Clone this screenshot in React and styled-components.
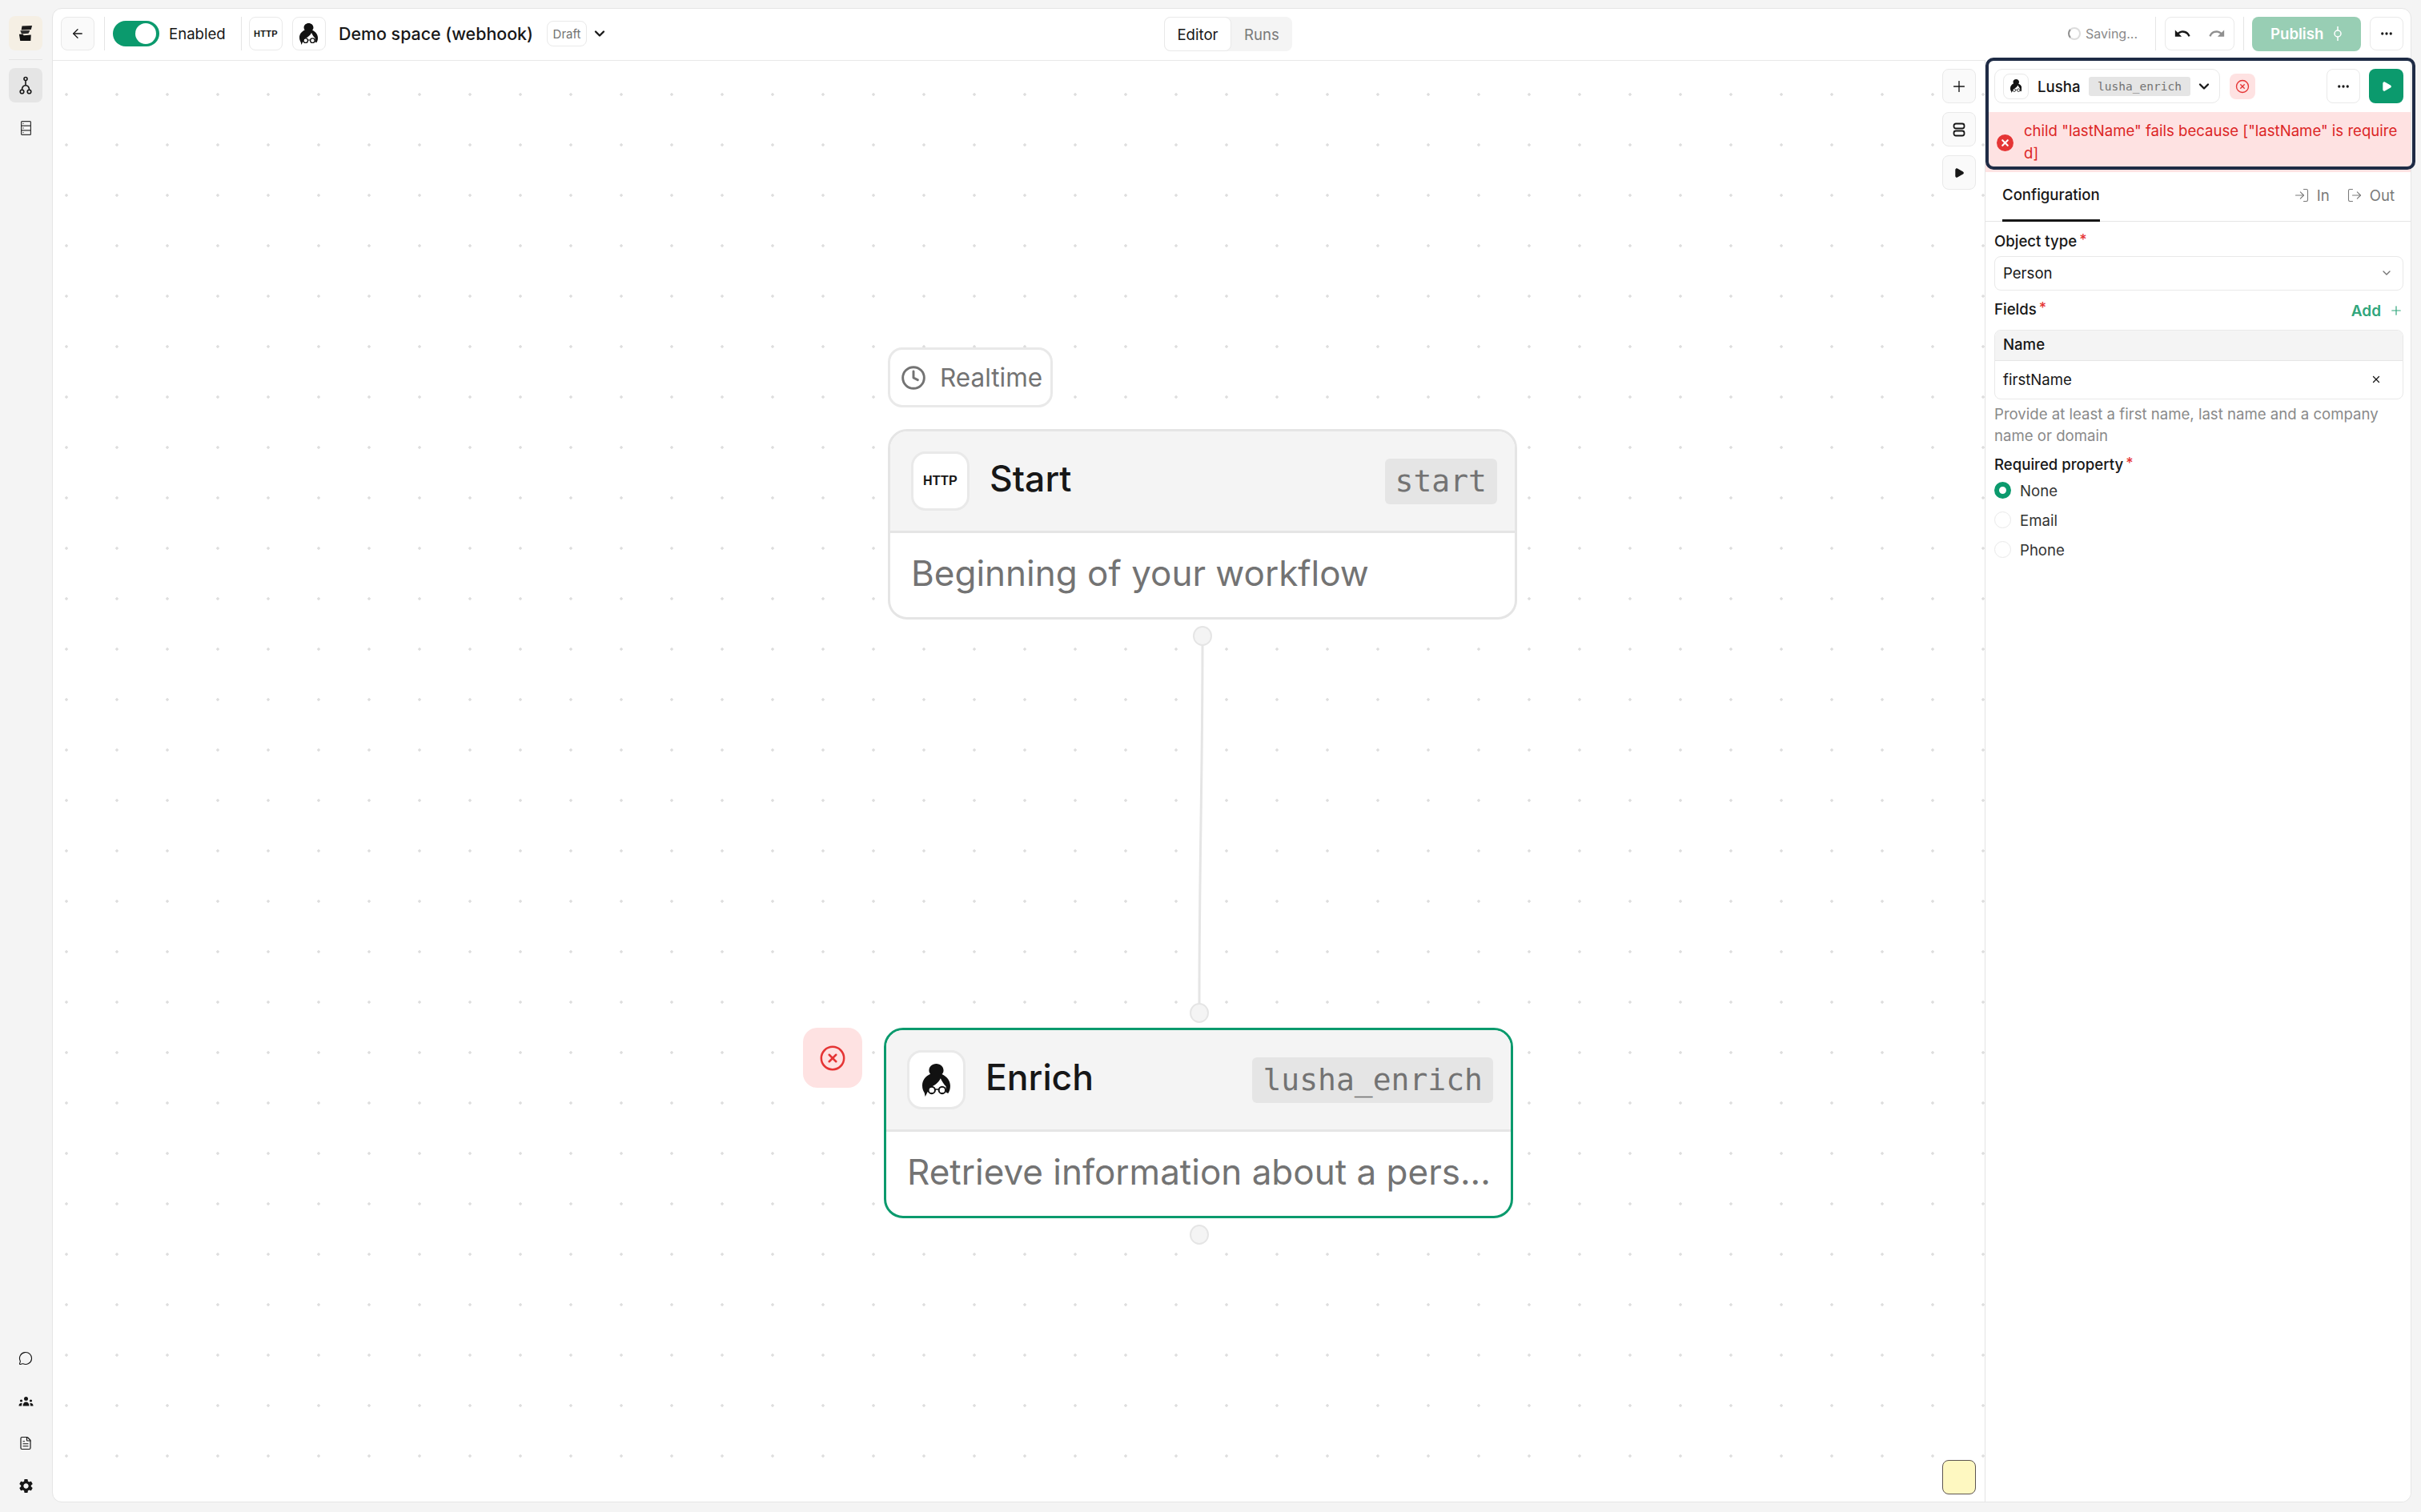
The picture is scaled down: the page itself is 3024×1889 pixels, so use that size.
import React from 'react';
import styled, { createGlobalStyle } from 'styled-components';
import { ArrowLeft, ChevronDown, Plus, Play, X, CircleX, Clock, MessageCircle, FileText, Ellipsis, LogIn, LogOut } from 'lucide-react';
import { MdUndo, MdRedo, MdSettings } from 'react-icons/md';

const Global = createGlobalStyle`
  html, body { margin: 0; padding: 0; background: #f4f4f4; }
  * { box-sizing: border-box; }
  body { font-family: Inter, "Liberation Sans", sans-serif; color: #171717; }
`;

const Page = styled.div`
  width: 3024px; height: 1889px; display: flex; background: #f4f4f4; overflow: hidden;
`;
const Rail = styled.nav`
  width: 65px; flex: none; display: flex; flex-direction: column; padding: 20px 12px 0 11px;
`;
const RailBtn = styled.div`
  width: 42px; height: 43px; border-radius: 8px; display: flex; align-items: center; justify-content: center;
  background: ${p => p.$active ? '#e5e5e5' : p.$brand ? '#f5efe4' : 'transparent'};
  color: #171717; margin-bottom: ${p => p.$gap || 0}px;
`;
const RailRule = styled.div`height: 1px; background: #e5e5e5; margin: 11px 0 10px;`;
const RailSpacer = styled.div`flex: 1;`;
const Card = styled.div`
  width: 2947px; height: 1867px; margin-top: 10px; background: #fff; border: 1px solid #e5e5e5;
  border-radius: 12px; display: flex; flex-direction: column; position: relative;
`;
const TopBar = styled.header`
  height: 65px; flex: none; border-bottom: 1.5px solid #e9e9e9; display: flex; align-items: center; padding: 0 9px 2px 10px; position: relative;
`;
const Square = styled.div`
  width: ${p => p.$w || 42}px; height: ${p => p.$h || 42}px; flex: none; border: 1.5px solid #e9e9e9; border-radius: 8px;
  margin-left: ${p => p.$ml || 0}px;
  display: flex; align-items: center; justify-content: center; background: ${p => p.$bg || '#fff'}; color: #171717;
`;
const VRule = styled.div`width: 1px; height: 42px; background: #e5e5e5; flex: none; margin: 0 ${p => p.$r ?? 10}px 0 ${p => p.$l ?? 12}px;`;
const Toggle = styled.div`
  width: 58px; height: 32px; border-radius: 16px; background: #0b9a6d; position: relative; flex: none;
  &::after { content: ''; position: absolute; top: 3px; right: 4px; width: 26px; height: 26px; border-radius: 50%; background: #fff; }
`;
const BarLabel = styled.span`font-size: 18.6px; font-weight: 400; margin-left: 12px; white-space: nowrap; width: 71px;`;
const HttpMark = styled.span`
  font-family: "Liberation Sans", Arial, sans-serif; font-weight: 700; font-size: ${p => p.$s || 11}px; letter-spacing: 0.3px; color: #171717;
`;
const Title = styled.span`font-size: 21.4px; font-weight: 450; margin-left: 16px; white-space: nowrap; width: 243px;`;
const Pill = styled.span`
  width: 50px; height: 32px; margin-left: 17px; border: 1.5px solid #e9e9e9; border-radius: 8px; display: flex; align-items: center; justify-content: center;
  color: #737373; font-size: 15px;
`;
const DraftChevron = styled.span`display: flex; margin-left: 6px;`;
const Tabs = styled.div`
  position: absolute; left: 1388px; top: 10px; width: 160px; height: 43px; display: flex; background: #f4f4f4; border-radius: 8px;
`;
const Tab = styled.div`
  height: 100%; width: ${p => p.$w}px; display: flex; align-items: center; justify-content: center; font-size: 18.6px; border-radius: 8px;
  color: ${p => p.$on ? '#171717' : '#7a7a7a'}; background: ${p => p.$on ? '#fff' : 'transparent'}; border: ${p => p.$on ? '1.5px solid #e9e9e9' : '0'};
`;
const Grow = styled.div`flex: 1;`;
const Saving = styled.div`display: flex; align-items: center; gap: 6px; color: #8a8a8a; font-size: 16px;`;
const Spinner = styled.span`
  width: 16px; height: 16px; border-radius: 50%; border: 2.5px solid #dcdcdc; border-left-color: #8f8f8f; display: block;
`;
const UndoGroup = styled.div`
  width: 87px; height: 42px; border: 1.5px solid #e9e9e9; border-radius: 8px; display: flex; align-items: center; justify-content: space-between; padding: 0 10px; flex: none;
`;
const Publish = styled.div`
  width: 136px; height: 43px; border-radius: 8px; background: #98ceb4; color: #fff; font-weight: 600; font-size: 18.6px; flex: none;
  display: flex; align-items: center; padding-left: 23px; gap: 12px;
`;
const Body = styled.div`flex: 1; min-height: 0; display: flex; position: relative; margin-top: -1px;`;
const Canvas = styled.main`
  flex: 1; position: relative; overflow: hidden; border-bottom-left-radius: 12px;
  background-image: radial-gradient(circle at 17px 43px, #dedede 0, #dedede 1.4px, transparent 2.1px);
  background-size: 63px 63px;
`;
const Controls = styled.div`
  position: absolute; right: 11px; top: 11px; display: flex; flex-direction: column; gap: 11px;
`;
const CtlBtn = styled(Square)`background: #fafafa; height: 43px;`;
const Sticky = styled.div`
  position: absolute; left: 2360px; top: 1749px; width: 42px; height: 43px; background: #fef8c1; border: 1.5px solid #5c5450; border-radius: 8px;
`;
const Badge = styled.div`
  position: absolute; left: ${p => p.$x}px; top: ${p => p.$y}px; width: 206px; height: 75px; background: #fff; border: 3px solid #e9e9e9;
  border-radius: 18px; display: flex; align-items: center; gap: 17px; padding-left: 13px; color: #737373; font-size: 31.5px;
`;
const Node = styled.section`
  position: absolute; left: ${p => p.$x}px; top: ${p => p.$y}px; width: 786px; height: 238px; background: #fff;
  border: 3px solid ${p => p.$sel ? '#0b9a6d' : '#e5e5e5'}; border-radius: 24px; overflow: hidden; display: flex; flex-direction: column;
`;
const NodeHead = styled.div`
  height: 127px; flex: none; background: #f4f4f4; border-bottom: 3px solid #e5e5e5; display: flex; align-items: center; padding: 0 22px 0 26px; gap: 25px;
`;
const NodeIcon = styled.div`
  width: 73px; height: 74px; border: 3px solid #e9e9e9; border-radius: 18px; background: #fff; flex: none; display: flex; align-items: center; justify-content: center;
`;
const NodeName = styled.span`font-size: 44.5px; font-weight: 500; flex: 1; margin-top: -6px; line-height: 1;`;
const NodeTag = styled.code`
  background: #e5e5e5; color: #737373; border-radius: 6px; height: 57px; padding: 0 13px; display: flex; align-items: center;
  font-family: "DejaVu Sans Mono", "Liberation Mono", monospace; font-size: 38px; white-space: nowrap;
`;
const NodeDesc = styled.div`
  flex: 1; display: flex; align-items: center; padding: 0 14px 6px 26px; min-width: 0; color: #737373; font-size: 44px; white-space: nowrap;
`;
const Handle = styled.div`
  position: absolute; left: ${p => p.$x}px; top: ${p => p.$y}px; width: 24px; height: 25px; border-radius: 50%; background: #f4f4f4; border: 2px solid #e5e5e5;
`;
const Edges = styled.svg`position: absolute; left: 0; top: 0; pointer-events: none;`;
const ErrFlag = styled.div`
  position: absolute; left: ${p => p.$x}px; top: ${p => p.$y}px; width: 74px; height: 75px; border-radius: 18px; background: #fee2e2; color: #e53535;
  display: flex; align-items: center; justify-content: center;
`;
const Panel = styled.aside`
  width: 532px; flex: none; border-left: 1.5px solid #e5e5e5; background: #fff; display: flex; flex-direction: column; position: relative; border-bottom-right-radius: 12px;
`;
const PanelHead = styled.div`
  height: 65px; flex: none; display: flex; align-items: center; padding: 0 9px 0 11px;
`;
const NodePick = styled.div`
  width: 282px; height: 43px; border: 1.5px solid #e9e9e9; border-radius: 10px; display: flex; align-items: center; padding-left: 10px; flex: none;
`;
const PickIcon = styled(Square)`width: 32px; height: 32px;`;
const PickName = styled.span`font-size: 18.6px; font-weight: 500; margin-left: 11px; width: 64px;`;
const PickTag = styled.code`
  width: 127px; height: 24px; background: #e5e5e5; color: #737373; border-radius: 3px; display: flex; align-items: center; justify-content: center;
  font-family: "DejaVu Sans Mono", "Liberation Mono", monospace; font-size: 14.5px;
`;
const PickChevron = styled.span`display: flex; margin-left: 7px;`;
const ErrBtn = styled.div`
  width: 32px; height: 32px; margin-left: 12px; border-radius: 8px; background: #fee2e2; color: #e53535; display: flex; align-items: center; justify-content: center; flex: none;
`;
const RunBtn = styled.div`
  width: 43px; height: 43px; margin-left: 11px; border-radius: 8px; background: #0b9a6d; color: #fff; display: flex; align-items: center; justify-content: center; flex: none;
`;
const Banner = styled.div`
  height: 75px; flex: none; background: #fee2e2; color: #dc2626; display: flex; align-items: center; padding: 0 12px 0 14px; gap: 13px; font-size: 18.6px; line-height: 27.5px;
`;
const BannerDot = styled.span`
  width: 21px; height: 21px; border-radius: 50%; background: #e53535; color: #fff; flex: none; display: flex; align-items: center; justify-content: center; margin-top: 1px;
`;
const BannerText = styled.span`word-break: break-all;`;
const PanelTabs = styled.div`
  height: 62px; flex: none; border-bottom: 1.5px solid #e5e5e5; display: flex; align-items: stretch; padding: 0 20px 0 21px;
`;
const ConfigTab = styled.div`
  font-size: 18.6px; font-weight: 450; display: flex; align-items: center; border-bottom: 3px solid #171717; width: 122px; margin-bottom: -1px; padding-bottom: 3px; white-space: nowrap;
`;
const SideTab = styled.div`
  display: flex; align-items: center; gap: 9px; color: #7a7a7a; font-size: 18.6px; margin-left: ${p => p.$m || 0}px; padding-bottom: 3px;
`;
const Form = styled.div`padding: 12px 9px 0 11px; display: flex; flex-direction: column;`;
const Label = styled.label`
  font-size: 18.6px; font-weight: 450; display: flex; gap: 3px; height: 24px; align-items: center; white-space: nowrap;
  color: #171717; margin-top: ${p => p.$mt || 0}px;
`;
const Req = styled.span`color: #e53535; font-size: 18px; margin-top: -3px;`;
const SelectBox = styled.div`
  height: 43px; margin-top: 7px; border: 1.5px solid #e9e9e9; border-radius: 8px; display: flex; align-items: center; justify-content: space-between; padding: 0 12px 2px 10px; font-size: 18.6px;
`;
const FieldsRow = styled.div`display: flex; justify-content: space-between; align-items: flex-start; margin-top: 11px; height: 38px;`;
const AddLink = styled.span`
  display: flex; align-items: center; gap: 10px; color: #31a67c; font-weight: 600; font-size: 19px; margin-top: 2px; height: 24px;
`;
const Table = styled.div`border: 1.5px solid #e9e9e9; border-radius: 8px; overflow: hidden; height: 87px;`;
const TableHead = styled.div`
  height: 38px; background: #f4f4f4; border-bottom: 1.5px solid #e5e5e5; display: flex; align-items: center; padding: 0 0 3px 10px; font-size: 18.6px; font-weight: 500;
`;
const TableRow = styled.div`height: 47px; display: flex; align-items: center; justify-content: space-between; padding: 0 26px 2px 10px; font-size: 18.6px;`;
const Help = styled.p`margin: 5px 0 0; color: #8a8a8a; font-size: 18.6px; line-height: 26.5px; width: 500px;`;
const RadioRow = styled.div`display: flex; align-items: center; gap: 11px; height: 37px; font-size: 18.6px; color: #333;`;
const RadioMark = styled.span`
  width: 21px; height: 21px; border-radius: 50%; flex: none;
  border: ${p => p.$on ? '6.5px solid #0b9a6d' : '1.5px solid #e9e9e9'}; background: #fff;
`;
const RadioList = styled.div`display: flex; flex-direction: column; margin-top: 2px;`;
const Highlight = styled.div`
  position: absolute; left: 2414px; top: -3px; width: 537px; height: 140px; border: 4px solid #1e2b45; border-radius: 10px; pointer-events: none; z-index: 5;
`;

const Lusha = ({ h = 28 }) => (
  <svg width={h * 104 / 122} height={h} viewBox="0 0 104 122" aria-hidden="true">
    <path d="M52 0C68 0 79 11 79 25C79 31 76 36 73 39C92 48 104 64 104 82C104 92 102 102 96 110L84 104L20 104L11 122L8 108C2 98 0 90 0 80C0 62 12 46 30 38C27 34 25 30 25 25C25 11 36 0 52 0Z" fill="#111" />
    <path d="M32 86C46 80 60 70 68 54C74 66 80 76 88 84L88 104C82 114 70 122 54 122C40 122 28 114 24 104Z" fill="#fff" />
    <circle cx="35" cy="98" r="12.500" fill="#fff" stroke="#111" strokeWidth="6" />
    <circle cx="74" cy="98" r="12.500" fill="#fff" stroke="#111" strokeWidth="6" />
    <path d="M47 95h15" stroke="#111" strokeWidth="4.500" />
  </svg>
);

const Brand = () => (
  <svg width="18" height="21" viewBox="0 0 20 22" aria-hidden="true">
    <path d="M5 1 19 .5 17.500 6 4 6.500z" fill="#1c1c1c" />
    <path d="M2.500 7.500 16 7.200l-2 4-9.500.8z" fill="#2c2c2c" />
    <path d="M1 12.500h5l1.500 1.500 10-.7-.5 8.200H2.500z" fill="#111" />
  </svg>
);
const FlowIcon = () => (
  <svg width="16" height="24" viewBox="0 0 16 24" fill="none" stroke="#171717" strokeWidth="1.600" aria-hidden="true">
    <circle cx="8" cy="3.500" r="2" />
    <circle cx="3.500" cy="19.500" r="2.300" />
    <circle cx="12.500" cy="19.500" r="2.300" />
    <path d="M8 5.500v6M8 11.500c-3 .5-4.500 2.500-4.500 5.700M8 11.500c3 .5 4.500 2.500 4.500 5.700" />
  </svg>
);
const TableIcon = () => (
  <svg width="13" height="18" viewBox="0 0 13 18" fill="none" stroke="#333" strokeWidth="1.200" aria-hidden="true">
    <rect x=".6" y=".6" width="11.800" height="16.800" rx="1" />
    <path d="M.6 6.200h11.800M.6 11.800h11.800" />
    <path d="M2.500 3.400h1M2.500 9h1M2.500 14.600h1" strokeWidth="1.300" />
  </svg>
);
const Team = () => (
  <svg width="19" height="12" viewBox="0 0 19 12" fill="#171717" aria-hidden="true">
    <circle cx="9.500" cy="2.600" r="2.500" />
    <path d="M5.500 11.500c0-3 1.500-5 4-5s4 2 4 5z" />
    <circle cx="3.500" cy="5" r="1.600" /><circle cx="15.500" cy="5" r="1.600" />
    <path d="M.5 11.500c0-2 1-3.500 3-3.500.5 0 1 .1 1.200.3-.5 1-.7 2-.7 3.200zM18.500 11.500c0-2-1-3.500-3-3.500-.5 0-1 .1-1.200.3.500 1 .7 2 .7 3.200z" />
  </svg>
);
const RowsIcon = () => (
  <svg width="16" height="18" viewBox="0 0 16 18" fill="none" stroke="#171717" strokeWidth="1.800" aria-hidden="true">
    <rect x="1.500" y="1.500" width="13" height="6" rx="2.500" />
    <rect x="1.500" y="10.500" width="13" height="6" rx="2.500" />
  </svg>
);
const CommitIcon = () => (
  <svg width="12" height="18" viewBox="0 0 12 18" fill="none" stroke="#fff" strokeWidth="1.500" aria-hidden="true">
    <circle cx="6" cy="9" r="4" />
    <path d="M6 0v5M6 13v5" />
  </svg>
);

export default function App() {
  return (
    <Page>
      <Global />
      <Rail>
        <RailBtn $brand><Brand /></RailBtn>
        <RailRule />
        <RailBtn $active $gap={10}><FlowIcon /></RailBtn>
        <RailBtn><TableIcon /></RailBtn>
        <RailSpacer />
        <RailBtn $gap={11}><MessageCircle size={18} strokeWidth={1.500} /></RailBtn>
        <RailBtn $gap={9}><Team /></RailBtn>
        <RailBtn $gap={11}><FileText size={18} strokeWidth={1.600} /></RailBtn>
        <RailBtn $gap={11}><MdSettings size={21} /></RailBtn>
      </Rail>
      <Card>
        <TopBar>
          <Square $bg="#fafafa"><ArrowLeft size={18} strokeWidth={1.700} /></Square>
          <VRule />
          <Toggle />
          <BarLabel>Enabled</BarLabel>
          <VRule $l={19} $r={9} />
          <Square><HttpMark>HTTP</HttpMark></Square>
          <Square $ml={12}><Lusha h={27} /></Square>
          <Title>Demo space (webhook)</Title>
          <Pill>Draft</Pill>
          <DraftChevron><ChevronDown size={20} strokeWidth={2.800} /></DraftChevron>
          <Tabs>
            <Tab $on $w={84}>Editor</Tab>
            <Tab $w={76}>Runs</Tab>
          </Tabs>
          <Grow />
          <Saving><Spinner />Saving...</Saving>
          <VRule $l={22} $r={11} />
          <UndoGroup>
            <MdUndo size={22} />
            <MdRedo size={22} color="#8f8f8f" />
          </UndoGroup>
          <VRule $l={11} $r={10} />
          <Publish>Publish<CommitIcon /></Publish>
          <Square $ml={11}><Ellipsis size={18} strokeWidth={2.400} /></Square>
        </TopBar>
        <Body>
          <Canvas>
            <Edges width="2413" height="1800" viewBox="0 0 2413 1800">
              <path d="M1436 730C1436 900 1432 1000 1432 1180" fill="none" stroke="#e5e5e5" strokeWidth="3" />
            </Edges>
            <Badge $x={1043} $y={359}><Clock size={32} strokeWidth={2.200} />Realtime</Badge>
            <Node $x={1043} $y={461}>
              <NodeHead>
                <NodeIcon><HttpMark $s={16}>HTTP</HttpMark></NodeIcon>
                <NodeName>Start</NodeName>
                <NodeTag>start</NodeTag>
              </NodeHead>
              <NodeDesc>Beginning of your workflow</NodeDesc>
            </Node>
            <Handle $x={1424} $y={707} />
            <Handle $x={1420} $y={1178} />
            <ErrFlag $x={937} $y={1209}><CircleX size={34} strokeWidth={1.800} /></ErrFlag>
            <Node $x={1038} $y={1209} $sel>
              <NodeHead>
                <NodeIcon><Lusha h={41} /></NodeIcon>
                <NodeName>Enrich</NodeName>
                <NodeTag>lusha_enrich</NodeTag>
              </NodeHead>
              <NodeDesc>Retrieve information about a pers...</NodeDesc>
            </Node>
            <Handle $x={1420} $y={1455} />
            <Controls>
              <CtlBtn><Plus size={22} strokeWidth={1.500} /></CtlBtn>
              <CtlBtn><RowsIcon /></CtlBtn>
              <CtlBtn><Play size={14} fill="#171717" strokeWidth={2} /></CtlBtn>
            </Controls>
            <Sticky />
          </Canvas>
          <Panel>
            <PanelHead>
              <NodePick>
                <PickIcon><Lusha h={17} /></PickIcon>
                <PickName>Lusha</PickName>
                <PickTag>lusha_enrich</PickTag>
                <PickChevron><ChevronDown size={20} strokeWidth={2.800} /></PickChevron>
              </NodePick>
              <ErrBtn><CircleX size={18} strokeWidth={1.800} /></ErrBtn>
              <Grow />
              <Square $w={42} $h={43}><Ellipsis size={18} strokeWidth={2.400} /></Square>
              <RunBtn><Play size={14} fill="#fff" strokeWidth={2} /></RunBtn>
            </PanelHead>
            <Banner>
              <BannerDot><X size={13} strokeWidth={4} /></BannerDot>
              <BannerText>child "lastName" fails because ["lastName" is required]</BannerText>
            </Banner>
            <PanelTabs>
              <ConfigTab>Configuration</ConfigTab>
              <Grow />
              <SideTab><LogIn size={20} strokeWidth={1.300} />In</SideTab>
              <SideTab $m={21}><LogOut size={20} strokeWidth={1.300} />Out</SideTab>
            </PanelTabs>
            <Form>
              <Label>Object type<Req>*</Req></Label>
              <SelectBox>Person<ChevronDown size={16} strokeWidth={2} color="#737373" /></SelectBox>
              <FieldsRow>
                <Label>Fields<Req>*</Req></Label>
                <AddLink>Add<Plus size={18} strokeWidth={1.600} /></AddLink>
              </FieldsRow>
              <Table>
                <TableHead>Name</TableHead>
                <TableRow>firstName<X size={14} strokeWidth={2.200} /></TableRow>
              </Table>
              <Help>Provide at least a first name, last name and a company name or domain</Help>
              <Label $mt={11}>Required property<Req>*</Req></Label>
              <RadioList>
                <RadioRow><RadioMark $on />None</RadioRow>
                <RadioRow><RadioMark />Email</RadioRow>
                <RadioRow><RadioMark />Phone</RadioRow>
              </RadioList>
            </Form>
          </Panel>
          <Highlight />
        </Body>
      </Card>
    </Page>
  );
}
